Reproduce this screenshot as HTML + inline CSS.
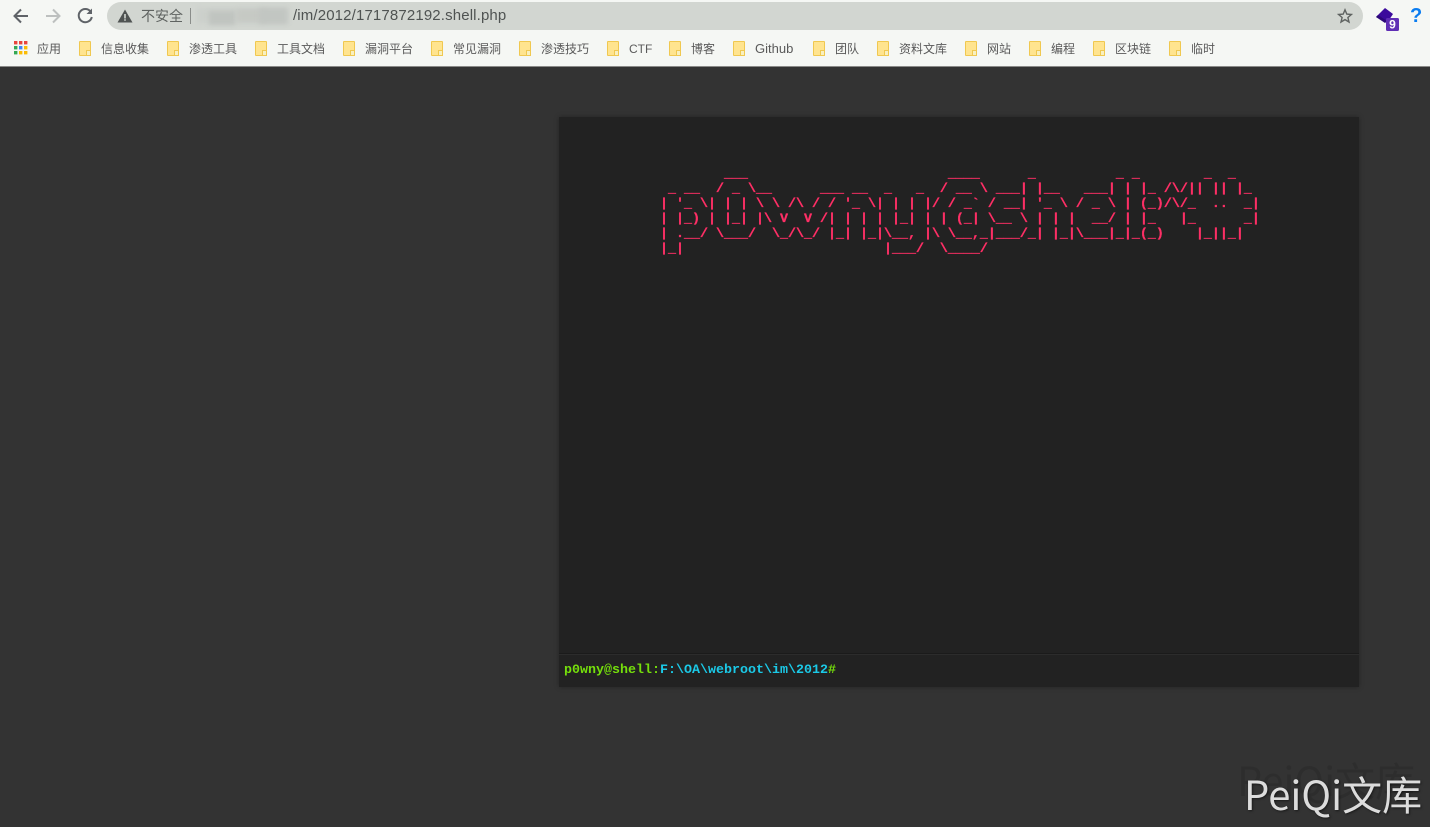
<!DOCTYPE html>
<html lang="zh"><head><meta charset="utf-8"><title>p0wny@shell</title>
<style>
html,body{margin:0;padding:0;width:1430px;height:827px;overflow:hidden;background:#333;}
*{box-sizing:border-box}
.a{position:absolute}
#bar{left:0;top:0;width:1430px;height:67px;background:#f5f7f4;border-bottom:1px solid #8a8a88;}
#url{left:107px;top:2px;width:1256px;height:28px;background:#d2d6d1;border-radius:14px;}
.t{font-family:"Liberation Sans","Noto Sans CJK SC",sans-serif;white-space:nowrap;}
.bm{position:absolute;top:41px;font:12px/16px "Liberation Sans","Noto Sans CJK SC",sans-serif;color:#5a5a5a;white-space:nowrap;}
.f{position:absolute;top:41px;width:12px;height:15px;background:#ffe48f;border:1px solid #f0c850;border-radius:1px;}
.f:after{content:"";position:absolute;right:-1px;bottom:-1px;width:3px;height:4px;background:#f8f0c0;border:1px solid #f0c850;}
#shell{left:559px;top:117px;width:800px;height:570px;background:#222;box-shadow:0 0 5px rgba(0,0,0,.3);}
#sep{left:0;top:536px;width:800px;height:2px;background:#1b1b1b;border-bottom:1px solid #2c2c2c;}
pre{margin:0;font:bold 13.333px/15px "Liberation Mono","DejaVu Sans Mono",monospace;}
#art{left:101px;top:50px;color:#ff2f66;-webkit-text-stroke:.3px #ff2f66;}
#pr{left:5px;top:546px;font:bold 13.333px/16px "Liberation Mono",monospace;white-space:pre;}
.wm{font-family:"Noto Sans CJK SC",sans-serif;white-space:nowrap;font-size:40px;line-height:56px;}
</style></head><body>
<div class="a" id="bar"></div>
<svg class="a" style="left:0;top:0" width="110" height="32" viewBox="0 0 110 32" fill="none">
<path d="M28 16H15M21 9.500L14.500 16l6.500 6.500" stroke="#5f6368" stroke-width="2"/>
<path d="M46 16H59M53 9.500L59.500 16 53 22.500" stroke="#bdc0bf" stroke-width="2"/>
<path d="M90.500 11.500A6.600 6.600 0 1 0 91.800 17" stroke="#5f6368" stroke-width="2"/>
<path d="M92 8.500V14H86.500Z" fill="#5f6368"/>
</svg>
<div class="a" id="url"></div>
<svg class="a" style="left:117px;top:9px" width="16" height="14" viewBox="0 0 16 14"><path d="M8 0.500L15.500 13.500H.5Z" fill="#4f5352"/><path d="M7.200 5h1.600v4.500H7.200zM7.200 10.300h1.600v1.500H7.200z" fill="#d2d6d1"/></svg>
<div class="a t" style="left:141px;top:7px;font-size:14px;line-height:18px;color:#5f6361">不安全</div>
<div class="a" style="left:190px;top:8px;width:1px;height:16px;background:#8a8d8a"></div>
<div class="a" style="left:195px;top:2px;width:100px;height:28px;overflow:hidden">
<div class="a" style="left:2px;top:6px;width:92px;height:15px;background:#ccd0cb;filter:blur(2px)"></div>
<div class="a" style="left:14px;top:9px;width:26px;height:14px;background:#c0c4c0;filter:blur(2px)"></div>
<div class="a" style="left:42px;top:7px;width:30px;height:13px;background:#c6c9c4;filter:blur(2px)"></div>
<div class="a" style="left:64px;top:6px;width:28px;height:16px;background:#c2c6c2;filter:blur(2px)"></div>
</div>
<div class="a t" style="left:293px;top:7px;font-size:15px;line-height:18px;color:#4f5352;letter-spacing:.14px">/im/2012/1717872192.shell.php</div>
<svg class="a" style="left:1337px;top:8px" width="16" height="16" viewBox="0 0 16 16"><path d="M8 1.800l1.800 4.300 4.600.4-3.500 3 1.100 4.500L8 11.600 4 14l1.100-4.500-3.500-3 4.600-.4z" fill="none" stroke="#5f6361" stroke-width="1.400"/></svg>
<svg class="a" style="left:1375px;top:6px" width="26" height="26" viewBox="0 0 26 26"><path d="M1 11L10 2l8 6-6 9z" fill="#3b0a9c"/><path d="M1 11l9 6 2-2-9-6z" fill="#2c0878"/><rect x="11" y="12" width="13" height="13" rx="1.500" fill="#5f2eb5"/><text x="17.500" y="22.500" font-family="Liberation Sans,sans-serif" font-size="12" font-weight="bold" fill="#fff" text-anchor="middle">9</text></svg>
<div class="a t" style="left:1410px;top:4px;font-size:20px;line-height:24px;font-weight:bold;color:#0a7cf0">?</div>
<svg class="a" style="left:14px;top:41px" width="14" height="14" viewBox="0 0 14 14">
<rect x="0" y="0" width="3.400" height="3.400" fill="#e8453c"/><rect x="5" y="0" width="3.400" height="3.400" fill="#e8453c"/><rect x="10" y="0" width="3.400" height="3.400" fill="#e8453c"/>
<rect x="0" y="5" width="3.400" height="3.400" fill="#34a853"/><rect x="5" y="5" width="3.400" height="3.400" fill="#4285f4"/><rect x="10" y="5" width="3.400" height="3.400" fill="#fbbc05"/>
<rect x="0" y="10" width="3.400" height="3.400" fill="#34a853"/><rect x="5" y="10" width="3.400" height="3.400" fill="#fbbc05"/><rect x="10" y="10" width="3.400" height="3.400" fill="#fbbc05"/></svg>
<div class="bm" style="left:37px">应用</div>
<div class="f" style="left:79px"></div><div class="bm" style="left:101px">信息收集</div>
<div class="f" style="left:167px"></div><div class="bm" style="left:189px">渗透工具</div>
<div class="f" style="left:255px"></div><div class="bm" style="left:277px">工具文档</div>
<div class="f" style="left:343px"></div><div class="bm" style="left:365px">漏洞平台</div>
<div class="f" style="left:431px"></div><div class="bm" style="left:453px">常见漏洞</div>
<div class="f" style="left:519px"></div><div class="bm" style="left:541px">渗透技巧</div>
<div class="f" style="left:607px"></div><div class="bm" style="left:629px">CTF</div>
<div class="f" style="left:669px"></div><div class="bm" style="left:691px">博客</div>
<div class="f" style="left:733px"></div><div class="bm" style="left:755px;font-size:13px">Github</div>
<div class="f" style="left:813px"></div><div class="bm" style="left:835px">团队</div>
<div class="f" style="left:877px"></div><div class="bm" style="left:899px">资料文库</div>
<div class="f" style="left:965px"></div><div class="bm" style="left:987px">网站</div>
<div class="f" style="left:1029px"></div><div class="bm" style="left:1051px">编程</div>
<div class="f" style="left:1093px"></div><div class="bm" style="left:1115px">区块链</div>
<div class="f" style="left:1169px"></div><div class="bm" style="left:1191px">临时</div>

<div class="a" id="shell">
<pre class="a" id="art">        ___                         ____      _          _ _        _  _
 _ __  / _ \__      ___ __  _   _  / __ \ ___| |__   ___| | |_ /\/|| || |_
| '_ \| | | \ \ /\ / / '_ \| | | |/ / _` / __| '_ \ / _ \ | (_)/\/_  ..  _|
| |_) | |_| |\ V  V /| | | | |_| | | (_| \__ \ | | |  __/ | |_   |_      _|
| .__/ \___/  \_/\_/ |_| |_|\__, |\ \__,_|___/_| |_|\___|_|_(_)    |_||_|
|_|                         |___/  \____/</pre>
<div class="a" id="sep"></div>
<div class="a" id="pr"><span style="color:#75df0b">p0wny@shell:</span><span style="color:#1bc9e7">F:\OA\webroot\im\2012</span><span style="color:#75df0b">#</span></div>
</div>

<div class="a wm" style="left:1237px;top:751px;color:rgba(0,0,0,.1)">PeiQi文库</div>
<div class="a wm" style="left:1244px;top:765px;color:#dcdcdc;text-shadow:1px 1px 2px rgba(0,0,0,.5)">PeiQi文库</div>
</body></html>
